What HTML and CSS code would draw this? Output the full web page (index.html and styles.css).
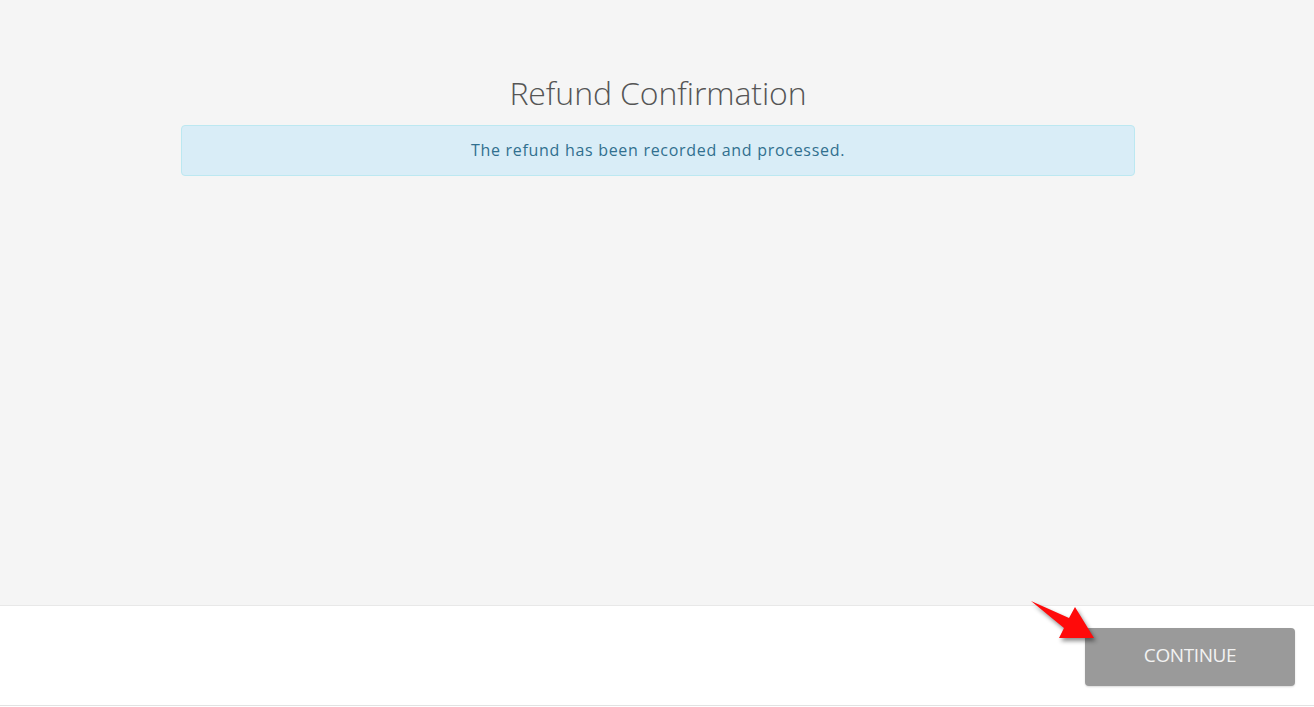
FILE: index.html
```html
<!DOCTYPE html>
<html lang="en">
<head>
<meta charset="utf-8">
<title>Refund Confirmation</title>
<link rel="stylesheet" href="styles.css">
</head>
<body>
<div class="page">
  <main class="content">
    <div class="container">
      <h1 class="title">Refund Confirmation</h1>
      <div class="alert">The refund has been recorded and processed.</div>
    </div>
  </main>
  <footer class="footer">
    <button class="btn-continue" type="button">CONTINUE</button>
    <svg class="arrow" width="80" height="50" viewBox="1025 595 80 50" aria-hidden="true">
      <polygon points="1031,601 1069,618 1075,607 1094,638 1059,638 1064,628" fill="#ff0a0a"/>
    </svg>
  </footer>
</div>
</body>
</html>
```
FILE: styles.css
```css
* { box-sizing: border-box; }
html, body {
  margin: 0;
  padding: 0;
  height: 100%;
  background: #ffffff;
  font-family: "Open Sans", "Liberation Sans", sans-serif;
}
.page {
  display: flex;
  flex-direction: column;
  height: 707px;
  overflow: hidden;
}
.content {
  height: 605px;
  background: #f5f5f5;
}
.container {
  width: 954px;
  margin: 0 0 0 calc(50% - 476px);
  padding-top: 73px;
}
.title {
  margin: 0 0 12px;
  text-align: center;
  font-weight: 300;
  font-size: 32px;
  line-height: 40px;
  color: #555555;
  letter-spacing: -0.1px;
}
.alert {
  height: 51px;
  display: flex;
  align-items: center;
  justify-content: center;
  background: #d9edf7;
  border: 1px solid #bce8f1;
  border-radius: 4px;
  color: #31708f;
  font-size: 16px;
  letter-spacing: 0.7px;
  padding-bottom: 1px;
}
.footer {
  position: relative;
  height: 101px;
  background: #ffffff;
  border-top: 1px solid #e8e8e8;
  border-bottom: 1px solid #e2e2e2;
  display: flex;
  justify-content: flex-end;
  align-items: flex-start;
  padding: 22px 19px 0 0;
}
.btn-continue {
  width: 210px;
  height: 58px;
  background: #9a9a9a;
  color: #f2f2f2;
  border: none;
  border-radius: 4px;
  font-family: "Open Sans", "Liberation Sans", sans-serif;
  font-size: 19px;
  letter-spacing: -0.4px;
  padding: 0 0 4px;
  box-shadow: 0 1px 2px rgba(0,0,0,0.15);
}
.arrow {
  position: absolute;
  left: 1025px;
  top: -11px;
  filter: drop-shadow(2px 3px 2px rgba(0,0,0,0.45));
}
```
